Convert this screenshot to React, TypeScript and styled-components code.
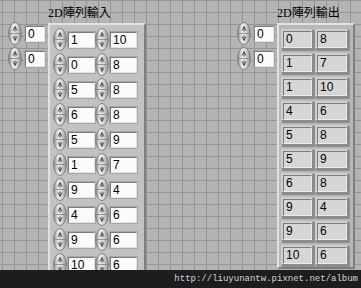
import React from 'react';
import styled, { createGlobalStyle } from 'styled-components';

const Global = createGlobalStyle`
  html, body { margin: 0; padding: 0; }
  body { width: 361px; height: 288px; overflow: hidden; font-family: "Liberation Sans", Arial, sans-serif; }
`;

const Screen = styled.div`
  width: 361px;
  height: 288px;
  display: flex;
  flex-direction: column;
  overflow: hidden;
  background-color: #b4b4b4;
  background-image:
    linear-gradient(to right, #959595 1px, transparent 1px),
    linear-gradient(to bottom, #959595 1px, transparent 1px);
  background-size: 12px 12px;
  background-position: 2px 0;
`;

const Panel = styled.div`
  height: 270px;
  display: flex;
  align-items: flex-start;
  overflow: hidden;
`;

const IndexCol = styled.div<{ $ml: number }>`
  margin-left: ${p => p.$ml}px;
  margin-top: 22px;
  display: flex;
  flex-direction: column;
  gap: 2px;
`;

const Control = styled.div<{ $gap?: number }>`
  display: flex;
  align-items: center;
  gap: ${p => p.$gap ?? 3}px;
  height: 23px;
`;

const NumBox = styled.div<{ $w: number }>`
  width: ${p => p.$w}px;
  height: 16px;
  box-sizing: border-box;
  background: #fbfbfb;
  border: 1px solid;
  border-color: #7c7c7c #e4e4e4 #e4e4e4 #7c7c7c;
  box-shadow: 0 0 0 1px #a6a6a6;
  font-size: 12px;
  line-height: 14px;
  padding-left: 2px;
  color: #000;
`;

const ArrayGroup = styled.div<{ $ml: number }>`
  margin-left: ${p => p.$ml}px;
  display: flex;
  flex-direction: column;
`;

const Title = styled.div`
  height: 23px;
  box-sizing: border-box;
  padding-top: 6px;
  font-family: "Liberation Serif", "Noto Sans CJK TC", serif;
  font-size: 12px;
  line-height: 14px;
  color: #000;
  white-space: nowrap;
`;

const Frame = styled.div<{ $w: number; $gap: number; $bg: string; $pt: number }>`
  width: ${p => p.$w}px;
  box-sizing: border-box;
  background: ${p => p.$bg};
  border: 2px solid;
  border-color: #e2e2e2 #7e7e7e #7e7e7e #e2e2e2;
  padding: ${p => p.$pt}px 3px 3px 3px;
  display: flex;
  flex-direction: column;
  gap: ${p => p.$gap}px;
`;

const InRow = styled.div`
  display: flex;
  align-items: center;
  height: 23px;
`;

const OutRow = styled.div`
  display: flex;
  align-items: center;
  gap: 5px;
  height: 17px;
  padding-left: 1px;
`;

const OutCell = styled.div<{ $w: number }>`
  width: ${p => p.$w}px;
  height: 17px;
  box-sizing: border-box;
  background: #d6d6d6;
  border: 1px solid;
  border-color: #7a7a7a #ececec #ececec #7a7a7a;
  box-shadow: -1px -1px 0 1px #cfcfcf, 1px 1px 0 2px #8c8c8c;
  font-size: 12px;
  line-height: 15px;
  padding-left: 2px;
  color: #000;
`;

const SpinSvg = styled.svg`
  display: block;
  flex: none;
`;

const Spinner: React.FC = () => (
  <SpinSvg width={14} height={23} viewBox="0 0 14 23">
    <defs>
      <linearGradient id="spg" x1="0" x2="1" y1="0" y2="0">
        <stop offset="0" stopColor="#8c8c8c" />
        <stop offset="0.35" stopColor="#ececec" />
        <stop offset="0.6" stopColor="#dcdcdc" />
        <stop offset="1" stopColor="#8e8e8e" />
      </linearGradient>
    </defs>
    <ellipse cx="7" cy="11.5" rx="6.4" ry="11" fill="url(#spg)" stroke="#707070" strokeWidth="0.8" />
    <line x1="1.5" y1="11.5" x2="12.5" y2="11.5" stroke="#808080" strokeWidth="0.8" />
    <path d="M7 4.5 L5.2 8.5 M7 4.5 L8.8 8.5 M7 5 L7 9.5" stroke="#404040" strokeWidth="0.9" fill="none" />
    <path d="M7 18.5 L5.2 14.5 M7 18.5 L8.8 14.5 M7 13.5 L7 18" stroke="#404040" strokeWidth="0.9" fill="none" />
  </SpinSvg>
);

const Footer = styled.div`
  height: 18px;
  background: #1d1d1d;
  color: #d4d4d4;
  font-family: "Liberation Mono", "DejaVu Sans Mono", monospace;
  font-size: 9px;
  line-height: 18px;
  text-align: right;
  padding-right: 3px;
`;

const input: [number, number][] = [
  [1, 10], [0, 8], [5, 8], [6, 8], [5, 9], [1, 7], [9, 4], [4, 6], [9, 6], [10, 6],
];
const output: [number, number][] = [
  [0, 8], [1, 7], [1, 10], [4, 6], [5, 8], [5, 9], [6, 8], [9, 4], [9, 6], [10, 6],
];

const IndexControl: React.FC<{ w: number }> = ({ w }) => (
  <Control>
    <Spinner />
    <NumBox $w={w}>0</NumBox>
  </Control>
);

export default function App() {
  return (
    <>
      <Global />
      <Screen>
        <Panel>
          <IndexCol $ml={8}>
            <IndexControl w={20} />
            <IndexControl w={20} />
          </IndexCol>
          <ArrayGroup $ml={3}>
            <Title>2D陣列輸入</Title>
            <Frame $w={98} $gap={2} $bg="#c2c2c2" $pt={3}>
              {input.map(([a, b], i) => (
                <InRow key={i}>
                  <Control $gap={1}>
                    <Spinner />
                    <NumBox $w={27}>{a}</NumBox>
                  </Control>
                  <Control $gap={1}>
                    <Spinner />
                    <NumBox $w={27}>{b}</NumBox>
                  </Control>
                </InRow>
              ))}
            </Frame>
          </ArrayGroup>
          <IndexCol $ml={91}>
            <IndexControl w={20} />
            <IndexControl w={20} />
          </IndexCol>
          <ArrayGroup $ml={3}>
            <Title>2D陣列輸出</Title>
            <Frame $w={78} $gap={7} $bg="#b8b8b8" $pt={6}>
              {output.map(([a, b], i) => (
                <OutRow key={i}>
                  <OutCell $w={29}>{a}</OutCell>
                  <OutCell $w={30}>{b}</OutCell>
                </OutRow>
              ))}
            </Frame>
          </ArrayGroup>
        </Panel>
        <Footer>http://liuyunantw.pixnet.net/album</Footer>
      </Screen>
    </>
  );
}
